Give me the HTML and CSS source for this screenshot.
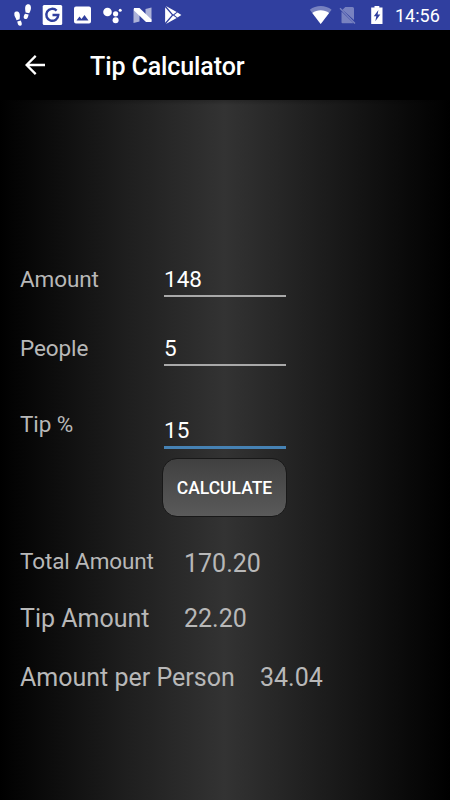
FILE: index.html
```
<!DOCTYPE html>
<html lang="en">
<head>
  <meta charset="utf-8">
  <title>Tip Calculator</title>
  <link rel="stylesheet" href="styles.css">
</head>
<body>
<div class="statusbar">
  <svg class="notifications" width="190" height="30" viewBox="0 0 190 30" fill="#fff">
    <!-- steps -->
    <path d="M14.300 13.500c.2-2.300 3.800-2.600 5-.4.900 1.800.6 4 .3 6.200l-3.100.9c-.5-2.200-2.500-3.900-2.200-6.700z"/>
    <path d="M17.300 21.400l3.400-.9c.9 1.500 2 4.900-.3 5.300-2.100.2-2.900-2.300-3.100-4.400z"/>
    <path d="M25.500 6c.9-2.300 4.500-2.400 5.200 0 .8 2.700-.2 5-1.500 7.200l-3.600-.8c-.4-2.200-.8-4.500-.1-6.400z"/>
    <path d="M25 13.700l3.600.8c-.3 2-1 4.900-3.300 4.600-2.500-.4-1.600-3.800-.3-5.400z"/>
    <!-- google -->
    <rect x="42.700" y="5" width="19.500" height="20" rx="1.500"/>
    <path d="M56.600 10.600A6 6 0 1 0 58.300 15H52.500" fill="none" stroke="#303f9f" stroke-width="2.400"/>
    <!-- picture -->
    <path fill-rule="evenodd" d="M76 6.500h13q2 0 2 2v13q0 2-2 2H76q-2 0-2-2v-13q0-2 2-2zM76.500 20.500h12l-4-5.500-3 4-2-2.500z"/>
    <!-- assistant -->
    <circle cx="107.500" cy="12" r="4.300"/>
    <circle cx="115.600" cy="13.800" r="2.600"/>
    <circle cx="115.600" cy="20.300" r="3"/>
    <circle cx="120.200" cy="10.200" r="1.500"/>
    <!-- android n -->
    <path opacity=".6" d="M133.500 8.500l6 5v8l-6 1.500zM145.500 9l6-1.500v14l-6-4z"/>
    <path d="M134 8h5.500l12 11.500v2.500H146l-12-11.500z"/>
    <!-- play store -->
    <path d="M165.100 7.200v15.600l6.800-7.800z"/>
    <path d="M165.900 6.100l10.800 5.800-3.600 2.600zM165.900 23.900l10.800-5.800-3.600-2.600zM177.500 12.400l3.900 2.600-3.900 2.600-3.200-2.600z"/>
  </svg>
  <svg class="system" width="80" height="30" viewBox="308 0 80 30" fill="#fff">
    <path opacity=".35" d="M309.800 9.700C316 4.700 325.400 4.700 331.600 9.700L320.700 24z"/>
    <path d="M312.300 12.900C317 9.200 324.400 9.200 329.100 12.900L320.700 24z"/>
    <path opacity=".35" d="M345.300 7h7.200q1.500 0 1.500 1.500v11.500L342.500 9.800zM341.500 11.500l12 11.700h-11q-1 0-1-1z"/>
    <path opacity=".35" d="M340 8.200l15 15.300" stroke="#fff" stroke-width="1.300"/>
    <path fill-rule="evenodd" d="M374.500 6h4.800v1.500h3.200v16.500h-11.300V7.500h3.300zM378.400 10l-4.600 6.300h2.500l-1 5 5-6.800h-2.700z"/>
  </svg>
  <span class="clock">14:56</span>
</div>

<div class="toolbar">
  <svg class="back" width="20" height="20" viewBox="0 0 20 20" fill="none" stroke="#fff" stroke-width="2.300">
    <path d="M20 10H2M10.700.900L1.600 10l9.100 9.100"/>
  </svg>
  <h1>Tip Calculator</h1>
</div>

<div class="content">
  <div class="row">
    <label for="amount">Amount</label>
    <input id="amount" type="text" value="148">
  </div>
  <div class="row">
    <label for="people">People</label>
    <input id="people" type="text" value="5">
  </div>
  <div class="row tip">
    <label for="tip">Tip %</label>
    <input id="tip" class="active" type="text" value="15">
  </div>
  <button class="calculate" type="button">CALCULATE</button>

  <div class="result total">
    <span>Total Amount</span>
    <span class="value">170.20</span>
  </div>
  <div class="result">
    <span>Tip Amount</span>
    <span class="value">22.20</span>
  </div>
  <div class="result person">
    <span>Amount per Person</span>
    <span class="value">34.04</span>
  </div>
</div>
</body>
</html>
```
FILE: styles.css
```
body {
    margin: 0;
    height: 800px;
    display: flex;
    flex-direction: column;
    overflow: hidden;
    background: #000;
    font-family: Roboto, sans-serif;
    color: #b8b8b8;
}
.statusbar {
    height: 30px;
    flex: none;
    display: flex;
    background: #303f9f;
    color: #fff;
}
.system {
    margin-left: 118px;
}
.clock {
    margin-left: 7px;
    font-size: 18px;
    line-height: 31px;
}
.toolbar {
    height: 70px;
    flex: none;
    display: flex;
    align-items: center;
    background: #000;
    color: #fff;
}
.back {
    margin-left: 25px;
}
h1 {
    margin: 2px 0 0 45px;
    font-size: 25px;
    font-weight: 500;
    letter-spacing: -0.1px;
}
.content {
    flex: 1;
    box-sizing: border-box;
    padding: 164px 20px 0;
    background:
        linear-gradient(rgba(0, 0, 0, 0.2), transparent 5px),
        linear-gradient(90deg, #000, #202020 30%, #333 50%, #202020 68%, #000);
}
.row {
    display: grid;
    grid-template-columns: 144px 122px;
    height: 69px;
    align-items: start;
    font-size: 22.5px;
    line-height: 30px;
    letter-spacing: -0.1px;
}
input {
    box-sizing: border-box;
    width: 122px;
    height: 33px;
    margin: 0;
    padding: 0 0 1px;
    border: none;
    border-bottom: 2px solid #a9a9a9;
    outline: none;
    background: none;
    color: #fff;
    font: 22.5px/30px Roboto, sans-serif;
}
.tip {
    height: 56px;
    padding-top: 7px;
    box-sizing: border-box;
}
.tip input {
    height: 34px;
    margin-top: 6px;
}
input.active {
    border-bottom: 3px solid #4682b4;
}
.calculate {
    display: block;
    box-sizing: border-box;
    width: 125px;
    height: 59px;
    margin: 0 0 0 142px;
    padding: 0;
    border: 1px solid #181818;
    border-radius: 15px;
    background: linear-gradient(#404040, #5a5a5a);
    color: #fff;
    font: 500 17.5px Roboto, sans-serif;
}
.result {
    display: grid;
    grid-template-columns: 164px auto;
    height: 59px;
    font-size: 25px;
    line-height: 30px;
}
.total {
    margin-top: 29px;
    height: 58px;
    font-size: 22.5px;
    letter-spacing: -0.12px;
}
.total .value {
    margin-top: 2px;
    font-size: 25px;
    letter-spacing: 0;
    line-height: 31px;
}
.person {
    grid-template-columns: 240px auto;
}
```
